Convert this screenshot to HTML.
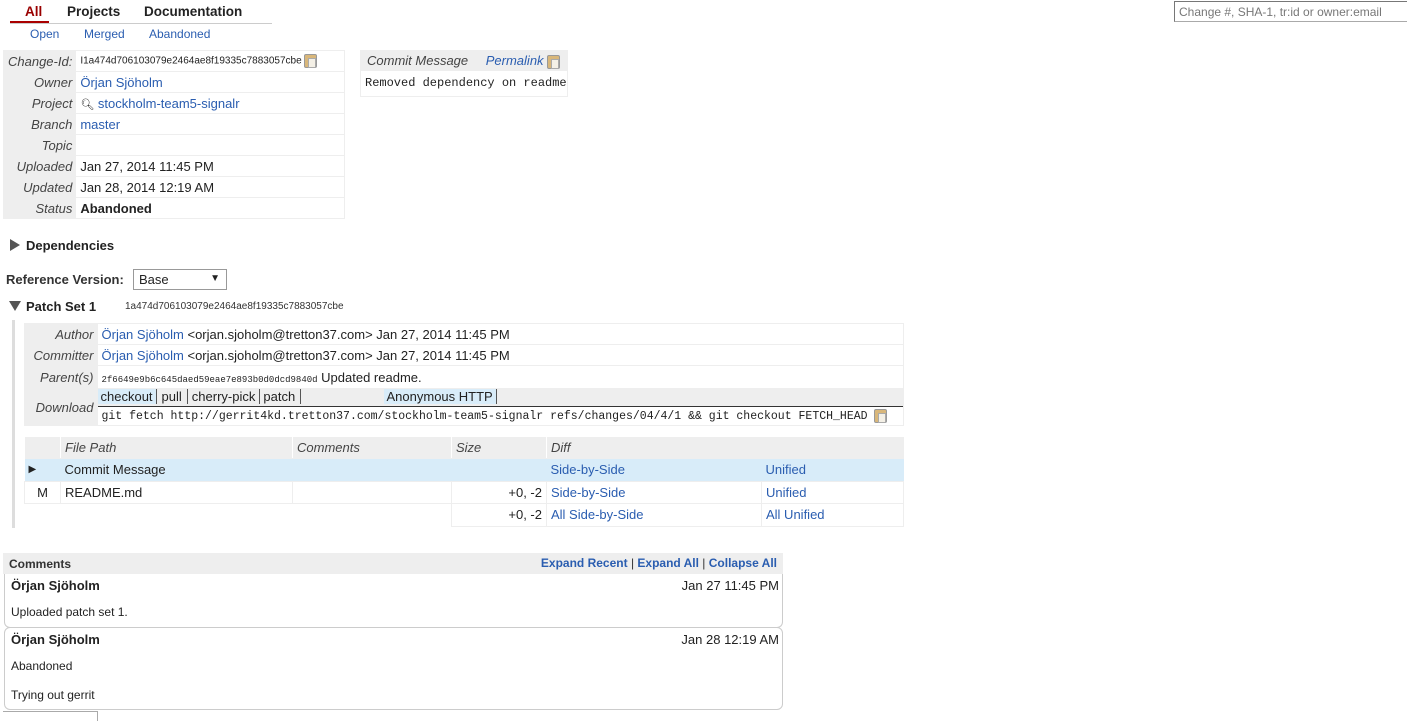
<!DOCTYPE html>
<html><head><meta charset="utf-8"><style>
*{box-sizing:border-box;margin:0;padding:0}
body{width:1407px;height:717px;overflow:hidden;background:#fff;font-family:"Liberation Sans",Arial,sans-serif;font-size:13px;color:#222;position:relative}
.a{position:absolute;white-space:nowrap}
a,.l{color:#2a5db0;text-decoration:none}
.lab{background:#eee;font-style:italic;color:#444;text-align:right;padding-right:4px}
.mono{font-family:"Liberation Mono",monospace}
.cp{display:inline-block;width:13px;height:14px;border:1px solid #999;background:#d9b77a;border-radius:2px;vertical-align:middle;position:relative}
.cp:after{content:"";position:absolute;left:3px;top:3px;width:6px;height:8px;background:#f4f0e6;border:1px solid #aaa}
table{border-collapse:collapse}
td{padding:0 4px;height:21px;border-bottom:1px solid #eee;vertical-align:middle}
</style></head><body>

<div class="a" style="left:25px;top:4px;font-weight:bold;font-size:13.5px;color:#900">All</div>
<div class="a" style="left:67px;top:4px;font-weight:bold;font-size:13.5px;color:#222">Projects</div>
<div class="a" style="left:144px;top:4px;font-weight:bold;font-size:13.5px;color:#222">Documentation</div>
<div class="a" style="left:10px;top:23px;width:262px;height:1px;background:#ccc"></div>
<div class="a" style="left:10px;top:21px;width:39px;height:2px;background:#a00"></div>
<div class="a l" style="left:30px;top:27px;font-size:12px">Open</div>
<div class="a l" style="left:84px;top:27px;font-size:12px">Merged</div>
<div class="a l" style="left:149px;top:27px;font-size:12px">Abandoned</div>

<div class="a" style="left:1174px;top:1px;width:240px;height:21px;border:1px solid #aaa;border-left-color:#777;border-top-color:#777;color:#777;font-size:12px;padding:3px 4px">Change #, SHA-1, tr:id or owner:email</div>

<table class="a" style="left:3px;top:50px;width:342px;border:1px solid #eee">
<tr><td class="lab" style="width:70px">Change-Id:</td><td style="font-size:10px">I1a474d706103079e2464ae8f19335c7883057cbe <span class="cp"></span></td></tr>
<tr><td class="lab">Owner</td><td><a>Örjan Sjöholm</a></td></tr>
<tr><td class="lab">Project</td><td><span style="font-size:11px">&#x1F50D;&#xFE0E;</span> <a>stockholm-team5-signalr</a></td></tr>
<tr><td class="lab">Branch</td><td><a>master</a></td></tr>
<tr><td class="lab">Topic</td><td></td></tr>
<tr><td class="lab">Uploaded</td><td>Jan 27, 2014 11:45 PM</td></tr>
<tr><td class="lab">Updated</td><td>Jan 28, 2014 12:19 AM</td></tr>
<tr><td class="lab">Status</td><td style="font-weight:bold">Abandoned</td></tr>
</table>

<div class="a" style="left:360px;top:50px;width:208px;height:47px;border:1px solid #eee">
<div style="background:#eee;height:20px;padding:2px 6px;font-style:italic;color:#444">Commit Message <span class="l" style="margin-left:14px">Permalink</span> <span class="cp"></span></div>
<div class="mono" style="font-size:12px;padding:5px 4px">Removed dependency on readme</div>
</div>

<div class="a" style="left:10px;top:239px;width:0;height:0;border-left:10px solid #555;border-top:6px solid transparent;border-bottom:6px solid transparent"></div>
<div class="a" style="left:26px;top:238px;font-weight:bold">Dependencies</div>

<div class="a" style="left:6px;top:272px;font-weight:bold;color:#333">Reference Version:</div>
<div class="a" style="left:133px;top:269px;width:94px;height:21px;border:1px solid #999;padding:2px 5px">Base<span style="position:absolute;right:6px;top:3px;font-size:10px">&#9660;</span></div>

<div class="a" style="left:9px;top:301px;width:0;height:0;border-top:10px solid #555;border-left:6px solid transparent;border-right:6px solid transparent"></div>
<div class="a" style="left:26px;top:299px;font-weight:bold">Patch Set 1</div>
<div class="a" style="left:125px;top:301px;font-size:10px;color:#333">1a474d706103079e2464ae8f19335c7883057cbe</div>

<div class="a" style="left:12px;top:320px;width:3px;height:208px;background:#ddd"></div>

<table class="a" style="left:24px;top:323px;width:880px;border:1px solid #eee">
<tr><td class="lab" style="width:73px">Author</td><td><a>Örjan Sjöholm</a> &lt;orjan.sjoholm@tretton37.com&gt; Jan 27, 2014 11:45 PM</td></tr>
<tr><td class="lab">Committer</td><td><a>Örjan Sjöholm</a> &lt;orjan.sjoholm@tretton37.com&gt; Jan 27, 2014 11:45 PM</td></tr>
<tr><td class="lab" style="height:23px">Parent(s)</td><td><span class="mono" style="font-size:9px">2f6649e9b6c645daed59eae7e893b0d0dcd9840d</span> Updated readme.</td></tr>
<tr><td class="lab" style="height:37px;border-bottom:none">Download</td><td style="padding:0;border-bottom:none">
<div style="background:#eee;height:17px;font-size:13px;position:relative">
<span style="display:inline-block;background:#d8ecf9;padding:0 3px;border-right:1px solid #555">checkout</span><span style="display:inline-block;padding:0 5px;border-right:1px solid #555">pull</span><span style="display:inline-block;padding:0 4px;border-right:1px solid #555">cherry-pick</span><span style="display:inline-block;padding:0 5px 0 3px;border-right:1px solid #555">patch</span>
<span style="position:absolute;left:286px;top:0;background:#d8ecf9;padding:0 3px;border-right:1px solid #555">Anonymous HTTP</span></div>
<div class="mono" style="font-size:11.5px;border-top:1px solid #333;height:19px;padding:2px 4px;background:#fff">git fetch http://gerrit4kd.tretton37.com/stockholm-team5-signalr refs/changes/04/4/1 &amp;&amp; git checkout FETCH_HEAD <span class="cp"></span></div>
</td></tr>
</table>

<table class="a" style="left:24px;top:437px;width:880px">
<tr style="background:#eee;font-style:italic;color:#444"><td style="width:36px;height:19px;border-right:1px solid #fff"></td><td style="width:232px;border-right:1px solid #fff">File Path</td><td style="width:159px;border-right:1px solid #fff">Comments</td><td style="width:95px;border-right:1px solid #fff">Size</td><td colspan="2">Diff</td></tr>
<tr style="background:#d8ecf9"><td style="height:23px;font-size:10px">&#9654;</td><td>Commit Message</td><td></td><td></td><td class="l" style="width:215px">Side-by-Side</td><td class="l">Unified</td></tr>
<tr><td style="text-align:center;height:22px;border:1px solid #eee">M</td><td style="border:1px solid #eee">README.md</td><td style="border:1px solid #eee"></td><td style="text-align:right;border:1px solid #eee">+0, -2</td><td class="l" style="border:1px solid #eee">Side-by-Side</td><td class="l" style="border:1px solid #eee">Unified</td></tr>
<tr><td colspan="3" style="border:none;height:23px"></td><td style="text-align:right;border:1px solid #eee">+0, -2</td><td class="l" style="border:1px solid #eee">All Side-by-Side</td><td class="l" style="border:1px solid #eee">All Unified</td></tr>
</table>

<div class="a" style="left:3px;top:553px;width:780px;height:21px;background:#eee;padding:4px 6px;font-weight:bold;font-size:12px;color:#333">Comments
<span style="position:absolute;right:6px;top:3px;color:#2a5db0">Expand Recent <span style="color:#333;font-weight:normal">|</span> Expand All <span style="color:#333;font-weight:normal">|</span> Collapse All</span></div>

<div class="a" style="left:4px;top:574px;width:779px;height:54px;border:1px solid #ccc;border-top:none;border-radius:0 0 6px 6px">
<div style="position:absolute;left:6px;top:4px;font-weight:bold">Örjan Sjöholm</div>
<div style="position:absolute;right:3px;top:4px;font-size:13px">Jan 27 11:45 PM</div>
<div style="position:absolute;left:6px;top:31px;font-size:12px">Uploaded patch set 1.</div>
</div>
<div class="a" style="left:4px;top:627px;width:779px;height:83px;border:1px solid #ccc;border-radius:6px">
<div style="position:absolute;left:6px;top:4px;font-weight:bold">Örjan Sjöholm</div>
<div style="position:absolute;right:3px;top:4px;font-size:13px">Jan 28 12:19 AM</div>
<div style="position:absolute;left:6px;top:31px;font-size:12px">Abandoned</div>
<div style="position:absolute;left:6px;top:60px;font-size:12px">Trying out gerrit</div>
</div>
<div class="a" style="left:3px;top:711px;width:95px;height:10px;border:1px solid #aaa;border-left:none;border-bottom:none"></div>
</body></html>
